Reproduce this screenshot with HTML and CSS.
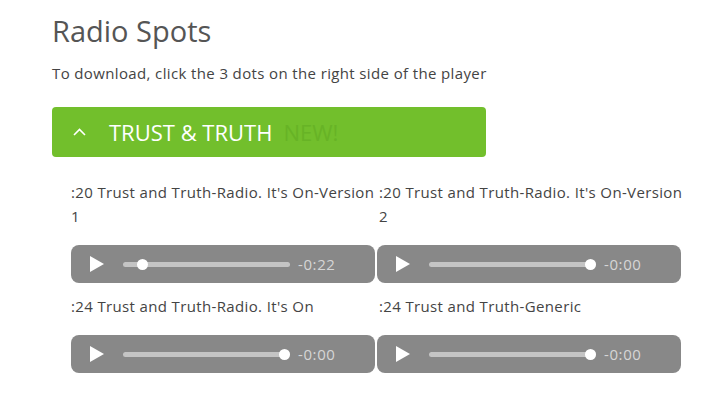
FILE: index.html
```html
<!DOCTYPE html>
<html lang="en">
<head>
    <meta charset="UTF-8">
    <meta name="viewport" content="width=device-width, initial-scale=1.0">
    <title>Radio Spots</title>
    <link rel="stylesheet" href="styles.css">
</head>
<body>
    <div class="page">
        <h1>Radio Spots</h1>
        <p class="note">To download, click the 3 dots on the right side of the player</p>

        <div class="panel">
            <div class="panel-head">
                <svg class="chevron" width="13" height="8" viewBox="0 0 13 8">
                    <polyline points="1,7 6.5,1.5 12,7" fill="none" stroke="#fff" stroke-width="1.6"/>
                </svg>
                <span class="panel-title">TRUST &amp; TRUTH</span>
                <span class="badge">NEW!</span>
            </div>

            <div class="spots">
                <div class="spot">
                    <div class="spot-title">:20 Trust and Truth-Radio. It's On-Version 1</div>
                    <div class="player">
                        <span class="play"></span>
                        <div class="track"><span class="thumb" style="left: 15%"></span></div>
                        <span class="time">-0:22</span>
                    </div>
                </div>
                <div class="spot">
                    <div class="spot-title">:20 Trust and Truth-Radio. It's On-Version 2</div>
                    <div class="player">
                        <span class="play"></span>
                        <div class="track"><span class="thumb" style="left: 100%"></span></div>
                        <span class="time">-0:00</span>
                    </div>
                </div>
                <div class="spot">
                    <div class="spot-title">:24 Trust and Truth-Radio. It's On</div>
                    <div class="player">
                        <span class="play"></span>
                        <div class="track"><span class="thumb" style="left: 100%"></span></div>
                        <span class="time">-0:00</span>
                    </div>
                </div>
                <div class="spot">
                    <div class="spot-title">:24 Trust and Truth-Generic</div>
                    <div class="player">
                        <span class="play"></span>
                        <div class="track"><span class="thumb" style="left: 100%"></span></div>
                        <span class="time">-0:00</span>
                    </div>
                </div>
            </div>
        </div>
    </div>
</body>
</html>
```

FILE: styles.css
```css
body {
    margin: 0;
    padding: 0;
    background: #fff;
    font-family: "Open Sans", "Liberation Sans", sans-serif;
    color: #444;
}
.page {
    padding: 13px 0 0 52px;
}
h1 {
    margin: 0;
    font-size: 29px;
    font-weight: 400;
    line-height: 36px;
    color: #555;
}
.note {
    margin: 12px 0 0;
    font-size: 15px;
    line-height: 24px;
    letter-spacing: 0.37px;
    color: #444;
}
.panel {
    margin-top: 22px;
}
.panel-head {
    width: 434px;
    height: 50px;
    background: #72bf2c;
    border-radius: 4px;
    display: flex;
    align-items: center;
    box-sizing: border-box;
    padding-left: 21px;
}
.chevron {
    margin-right: 23px;
}
.panel-title {
    font-size: 22px;
    color: #fff;
}
.badge {
    margin-left: 11px;
    font-size: 22px;
    color: #67b326;
}
.spots {
    display: grid;
    grid-template-columns: 306px 306px;
    row-gap: 11px;
    margin: 23px 0 0 19px;
}
.spot-title {
    font-size: 15px;
    line-height: 24px;
    letter-spacing: 0.36px;
    color: #444;
    margin-bottom: 17px;
}
.spot:nth-child(even) .spot-title {
    padding-left: 2px;
}
.player {
    width: 304px;
    height: 38px;
    background: #888;
    border-radius: 8px;
    display: flex;
    align-items: center;
    box-sizing: border-box;
    padding: 0 38px 0 19px;
}
.play {
    width: 0;
    height: 0;
    border-left: 14px solid #fff;
    border-top: 8px solid transparent;
    border-bottom: 8px solid transparent;
    margin-right: 19px;
}
.track {
    flex: 1;
    height: 5px;
    background: #c4c4c4;
    border-radius: 3px;
    position: relative;
}
.thumb {
    position: absolute;
    top: 50%;
    width: 11px;
    height: 11px;
    margin: -5.5px 0 0 -11px;
    background: #fff;
    border-radius: 50%;
}
.time {
    margin-left: 8px;
    width: 39px;
    font-size: 15px;
    letter-spacing: 0.6px;
    color: #d6d6d6;
}
```
